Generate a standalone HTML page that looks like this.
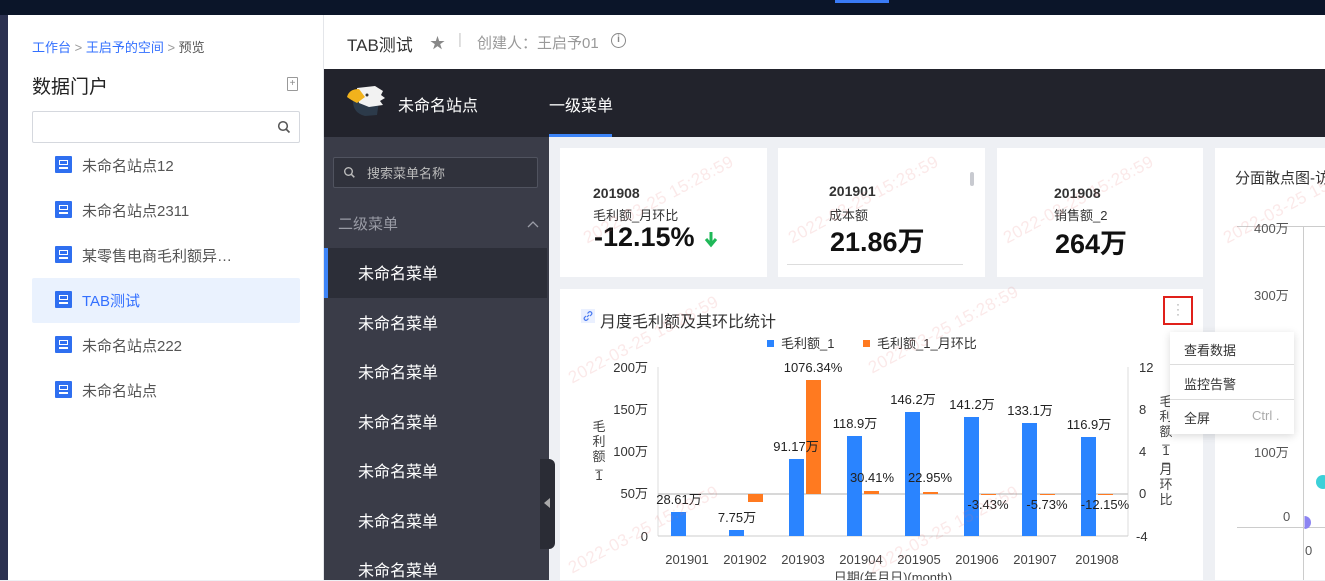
<!DOCTYPE html>
<html><head><meta charset="utf-8">
<style>
*{box-sizing:border-box;margin:0;padding:0}
body{width:1325px;height:580px;overflow:hidden;position:relative;background:#eef0f4;font-family:"Liberation Sans","Noto Sans CJK SC",sans-serif;}
.a{position:absolute;white-space:nowrap}
.wm{position:absolute;color:rgba(230,120,120,0.16);font-size:17px;transform:rotate(-28deg);white-space:nowrap;letter-spacing:0.5px}
</style></head><body>
<div class="a" style="left:0;top:0;width:1325px;height:15px;background:#0b1529"></div>
<div class="a" style="top:0;left:835px;width:54px;height:3px;background:#3a7bf6"></div>
<div class="a" style="left:0;top:15px;width:8px;height:565px;background:#2b3150"></div>
<div class="a" style="left:8px;top:15px;width:316px;height:565px;background:#fff;border-right:1px solid #e4e6ea"></div>
<div class="a" style="left:32px;top:37px;font-size:13px;color:#3370ff">工作台 <span style="color:#999">&gt;</span> 王启予的空间 <span style="color:#999">&gt;</span> <span style="color:#555">预览</span></div>
<div class="a" style="left:32px;top:72px;font-size:19px;color:#222">数据门户</div>
<div class="a" style="left:287px;top:77px;width:11px;height:14px;border:1px solid #999;border-radius:1px;font-size:10px;line-height:11px;text-align:center;color:#888">+</div>
<div class="a" style="left:32px;top:111px;width:268px;height:32px;border:1px solid #d5d8de;border-radius:2px"></div>
<svg class="a" style="left:277px;top:120px" width="14" height="14" viewBox="0 0 14 14"><circle cx="6" cy="6" r="4.3" fill="none" stroke="#555" stroke-width="1.5"/><path d="M9 9l3.5 3.5" stroke="#555" stroke-width="1.6"/></svg>
<div class="a" style="left:32px;top:278px;width:268px;height:45px;background:#eaf2fe;border-radius:2px"></div>
<div id="list"></div>
<div class="a" style="left:324px;top:15px;width:1001px;height:54px;background:#fff"></div>
<div class="a" style="left:347px;top:31px;font-size:17px;color:#333">TAB测试</div>
<div class="a" style="left:430px;top:32px;font-size:15px;color:#888">★</div>
<div class="a" style="left:458px;top:31px;font-size:15px;color:#ccc">|</div>
<div class="a" style="left:477px;top:32px;font-size:15px;color:#999">创建人：王启予01</div>
<div class="a" style="left:611px;top:33px;width:15px;height:15px;border:1.5px solid #888;border-radius:50%;font-size:10px;line-height:12px;text-align:center;color:#888;font-weight:bold">i</div>
<div class="a" style="left:324px;top:69px;width:1001px;height:68px;background:#22232c"></div>
<svg class="a" style="left:345px;top:83px" width="42" height="36" viewBox="0 0 42 36"><path d="M8 18 Q8 30 20 33 L32 32 L34 18Z" fill="#2c3a4a"/><path d="M12 5 L30 3 L38 8 L36 12 L40 15 L35 18 L38 22 L24 24 L14 20Z" fill="#f2f2f2"/><path d="M2 14 Q4 6 14 6 L20 14 L12 20 Q6 17 2 14Z" fill="#f1b21c"/><circle cx="22" cy="12" r="1.5" fill="#333"/></svg>
<div class="a" style="left:398px;top:92px;font-size:16px;color:#fff">未命名站点</div>
<div class="a" style="left:549px;top:92px;font-size:16px;color:#fff">一级菜单</div>
<div class="a" style="left:549px;top:134px;width:63px;height:3px;background:#3d84f7"></div>
<div class="a" style="left:324px;top:137px;width:225px;height:443px;background:#3a3c48"></div>
<div class="a" style="left:333px;top:157px;width:205px;height:31px;border:1px solid #50535f;border-radius:2px;background:#30323c"></div>
<svg class="a" style="left:343px;top:166px" width="13" height="13" viewBox="0 0 13 13"><circle cx="5.5" cy="5.5" r="3.8" fill="none" stroke="#bbb" stroke-width="1.4"/><path d="M8.3 8.3l3 3" stroke="#bbb" stroke-width="1.5"/></svg>
<div class="a" style="left:367px;top:163px;font-size:13px;color:#bbb">搜索菜单名称</div>
<div class="a" style="left:338px;top:213px;font-size:15px;color:#9a9ca6">二级菜单</div>
<svg class="a" style="left:527px;top:220px" width="12" height="8"><path d="M1 7L6 2L11 7" fill="none" stroke="#9a9ca6" stroke-width="1.3"/></svg>
<div class="a" style="left:324px;top:248px;width:223px;height:50px;background:#2c2e38"></div>
<div class="a" style="left:324px;top:248px;width:4px;height:50px;background:#3d84f7"></div>
<div id="menu"></div>
<div class="a" style="left:540px;top:459px;width:15px;height:90px;background:#2a2c35;border-radius:0 6px 6px 0"></div>
<div class="a" style="left:544px;top:498px;width:0;height:0;border-top:5px solid transparent;border-bottom:5px solid transparent;border-right:6px solid #aaa"></div>
<div class="a" style="left:560px;top:148px;width:207px;height:129px;background:#fff"></div>
<div class="a" style="left:778px;top:148px;width:207px;height:129px;background:#fff"></div>
<div class="a" style="left:997px;top:148px;width:206px;height:129px;background:#fff"></div>
<div class="a" style="left:1215px;top:148px;width:110px;height:432px;background:#fff"></div>
<div class="a" style="left:560px;top:289px;width:643px;height:291px;background:#fff"></div>

<div class="a" style="left:593px;top:185px;font-size:14px;font-weight:bold;color:#333">201908</div>
<div class="a" style="left:593px;top:205px;font-size:13px;color:#333">毛利额_月环比</div>
<div class="a" style="left:594px;top:222px;font-size:27px;font-weight:bold;color:#111">-12.15%</div>
<svg class="a" style="left:704px;top:231px" width="14" height="17"><path d="M7 1v11M2 8l5 6 5-6" fill="none" stroke="#1fb858" stroke-width="3"/></svg>
<div class="a" style="left:829px;top:183px;font-size:14px;font-weight:bold;color:#333">201901</div>
<div class="a" style="left:829px;top:205px;font-size:13px;color:#333">成本额</div>
<div class="a" style="left:830px;top:220px;font-size:27px;font-weight:bold;color:#111">21.86万</div>
<div class="a" style="left:787px;top:264px;width:176px;height:1px;background:#ddd"></div>
<div class="a" style="left:970px;top:172px;width:4px;height:14px;background:#c8cad0;border-radius:2px"></div>
<div class="a" style="left:1054px;top:185px;font-size:14px;font-weight:bold;color:#333">201908</div>
<div class="a" style="left:1054px;top:205px;font-size:13px;color:#333">销售额_2</div>
<div class="a" style="left:1055px;top:222px;font-size:27px;font-weight:bold;color:#111">264万</div>

<div class="a" style="left:1235px;top:167px;font-size:15px;color:#333">分面散点图-访</div>
<div class="a" style="left:1237px;top:226px;width:88px;height:1px;background:#ccc"></div>
<div class="a" style="left:1303px;top:226px;width:1px;height:354px;background:#ccc"></div>
<div class="a" style="left:1237px;top:527px;width:88px;height:1px;background:#ccc"></div>
<div class="a" style="left:1254px;top:218px;font-size:13px;color:#555">400万</div>
<div class="a" style="left:1254px;top:285px;font-size:13px;color:#555">300万</div>
<div class="a" style="left:1254px;top:442px;font-size:13px;color:#555">100万</div>
<div class="a" style="left:1283px;top:509px;font-size:13px;color:#555">0</div>
<div class="a" style="left:1305px;top:543px;font-size:13px;color:#555">0</div>
<div class="a" style="left:1316px;top:475px;width:14px;height:14px;border-radius:50%;background:#3cd0d8"></div>
<div class="a" style="left:1298px;top:516px;width:13px;height:13px;border-radius:50%;background:#8c84f2;clip-path:inset(0 0 0 50%)"></div>

<div class="a" style="left:581px;top:309px;width:14px;height:14px;background:#eaf0ff"></div>
<svg class="a" style="left:582px;top:310px" width="12" height="12"><path d="M5 7l2-2M4 6L2.5 7.5a1.8 1.8 0 0 0 2.5 2.5L6.5 8.5M8 6l1.5-1.5A1.8 1.8 0 0 0 7 2L5.5 3.5" fill="none" stroke="#4b7bf0" stroke-width="1.2"/></svg>
<div class="a" style="left:600px;top:308px;font-size:16px;color:#333">月度毛利额及其环比统计</div>
<div class="a" style="left:1163px;top:296px;width:30px;height:29px;border:2px solid #e0201a"></div>
<div class="a" style="left:1176px;top:302px;font-size:12px;line-height:5px;color:#999">·<br>·<br>·</div>

<svg class="a" style="left:560px;top:330px" width="643" height="250" font-family="Liberation Sans, Noto Sans CJK SC, sans-serif">
<g transform="translate(-560,-330)">
<rect x="767" y="340" width="7" height="7" fill="#2a84ff"/><text x="781" y="348" font-size="13" fill="#333">毛利额_1</text>
<rect x="863" y="340" width="7" height="7" fill="#ff7a20"/><text x="877" y="348" font-size="13" fill="#333">毛利额_1_月环比</text>
<line x1="658" y1="367" x2="658" y2="536" stroke="#ddd"/>
<line x1="1128" y1="367" x2="1128" y2="536" stroke="#ddd"/>
<line x1="658" y1="494" x2="1128" y2="494" stroke="#ccc" stroke-width="1.5"/>
<line x1="658" y1="536" x2="1128" y2="536" stroke="#ccc"/>
<g font-size="13" fill="#333" text-anchor="end">
<text x="648" y="372">200万</text><text x="648" y="414">150万</text><text x="648" y="456">100万</text><text x="648" y="498">50万</text><text x="648" y="541">0</text>
</g>
<g font-size="13" fill="#333">
<text x="1139" y="372">12</text><text x="1139" y="414">8</text><text x="1139" y="456">4</text><text x="1139" y="498">0</text><text x="1136" y="541">-4</text>
</g>
<g font-size="13" fill="#444" text-anchor="middle">
<text x="599" y="431">毛</text><text x="599" y="446">利</text><text x="599" y="461">额</text><text x="599" y="468">_</text><text x="599" y="480">1</text>
<text x="1166" y="406">毛</text><text x="1166" y="421">利</text><text x="1166" y="436">额</text><text x="1166" y="443">_</text><text x="1166" y="455">1</text><text x="1166" y="461">_</text><text x="1166" y="474">月</text><text x="1166" y="489">环</text><text x="1166" y="504">比</text>
</g>
<g fill="#2a84ff">
<rect x="671" y="512" width="15" height="24"/><rect x="729" y="530" width="15" height="6"/><rect x="789" y="459" width="15" height="77"/><rect x="847" y="436" width="15" height="100"/><rect x="905" y="412" width="15" height="124"/><rect x="964" y="417" width="15" height="119"/><rect x="1022" y="423" width="15" height="113"/><rect x="1081" y="437" width="15" height="99"/>
</g>
<g fill="#ff7a20">
<rect x="748" y="494" width="15" height="8"/><rect x="806" y="380" width="15" height="114"/><rect x="864" y="491" width="15" height="3"/><rect x="923" y="492" width="15" height="2"/><rect x="981" y="494" width="15" height="1"/><rect x="1040" y="494" width="15" height="1"/><rect x="1098" y="494" width="15" height="1"/>
</g>
<g font-size="13" fill="#222" text-anchor="middle">
<text x="679" y="504">28.61万</text><text x="737" y="522">7.75万</text><text x="813" y="372">1076.34%</text><text x="796" y="451">91.17万</text><text x="855" y="428">118.9万</text><text x="872" y="482">30.41%</text><text x="913" y="404">146.2万</text><text x="930" y="482">22.95%</text><text x="972" y="409">141.2万</text><text x="988" y="509">-3.43%</text><text x="1030" y="415">133.1万</text><text x="1047" y="509">-5.73%</text><text x="1089" y="429">116.9万</text><text x="1105" y="509">-12.15%</text>
</g>
<g font-size="13" fill="#444" text-anchor="middle">
<text x="687" y="564">201901</text><text x="745" y="564">201902</text><text x="803" y="564">201903</text><text x="861" y="564">201904</text><text x="919" y="564">201905</text><text x="977" y="564">201906</text><text x="1035" y="564">201907</text><text x="1097" y="564">201908</text>
<text x="893" y="582">日期(年月日)(month)</text>
</g>
</g></svg>

<div class="a" style="left:1170px;top:332px;width:124px;height:102px;background:#fff;box-shadow:0 2px 8px rgba(0,0,0,0.15)"></div>
<div class="a" style="left:1184px;top:340px;font-size:13px;color:#333">查看数据</div>
<div class="a" style="left:1170px;top:364px;width:124px;height:1px;background:#ddd"></div>
<div class="a" style="left:1184px;top:374px;font-size:13px;color:#333">监控告警</div>
<div class="a" style="left:1170px;top:399px;width:124px;height:1px;background:#ddd"></div>
<div class="a" style="left:1184px;top:408px;font-size:13px;color:#333">全屏</div>
<div class="a" style="left:1252px;top:408px;font-size:13px;color:#aaa">Ctrl .</div>

<div class="wm" style="left:575px;top:190px">2022-03-25 15:28:59</div>
<div class="wm" style="left:780px;top:190px">2022-03-25 15:28:59</div>
<div class="wm" style="left:995px;top:190px">2022-03-25 15:28:59</div>
<div class="wm" style="left:560px;top:330px">2022-03-25 15:28:59</div>
<div class="wm" style="left:860px;top:320px">2022-03-25 15:28:59</div>
<div class="wm" style="left:560px;top:520px">2022-03-25 15:28:59</div>
<div class="wm" style="left:860px;top:520px">2022-03-25 15:28:59</div>
<div class="wm" style="left:1215px;top:190px">2022-03-25 15:28:59</div>

<script>
var l=["未命名站点12","未命名站点2311","某零售电商毛利额异…","TAB测试","未命名站点222","未命名站点"],h="";
l.forEach(function(t,i){var y=165+i*45;
h+='<div class="a" style="left:55px;top:'+(y-9)+'px;width:17px;height:17px;background:#2f6ff0;border-radius:1px"><div style="position:absolute;left:4px;top:4px;width:9px;height:5px;border:1.5px solid #fff"></div><div style="position:absolute;left:4px;top:11px;width:9px;height:1.5px;background:#fff"></div></div>';
h+='<div class="a" style="left:82px;top:'+(y-10)+'px;font-size:15px;color:'+(i==3?'#3370ff':'#555')+'">'+t+'</div>';});
document.getElementById('list').innerHTML=h;
h="";for(var i=0;i<7;i++){h+='<div class="a" style="left:358px;top:'+(260+i*49.5)+'px;font-size:16px;color:#fff">未命名菜单</div>';}
document.getElementById('menu').innerHTML=h;
</script>
</body></html>
